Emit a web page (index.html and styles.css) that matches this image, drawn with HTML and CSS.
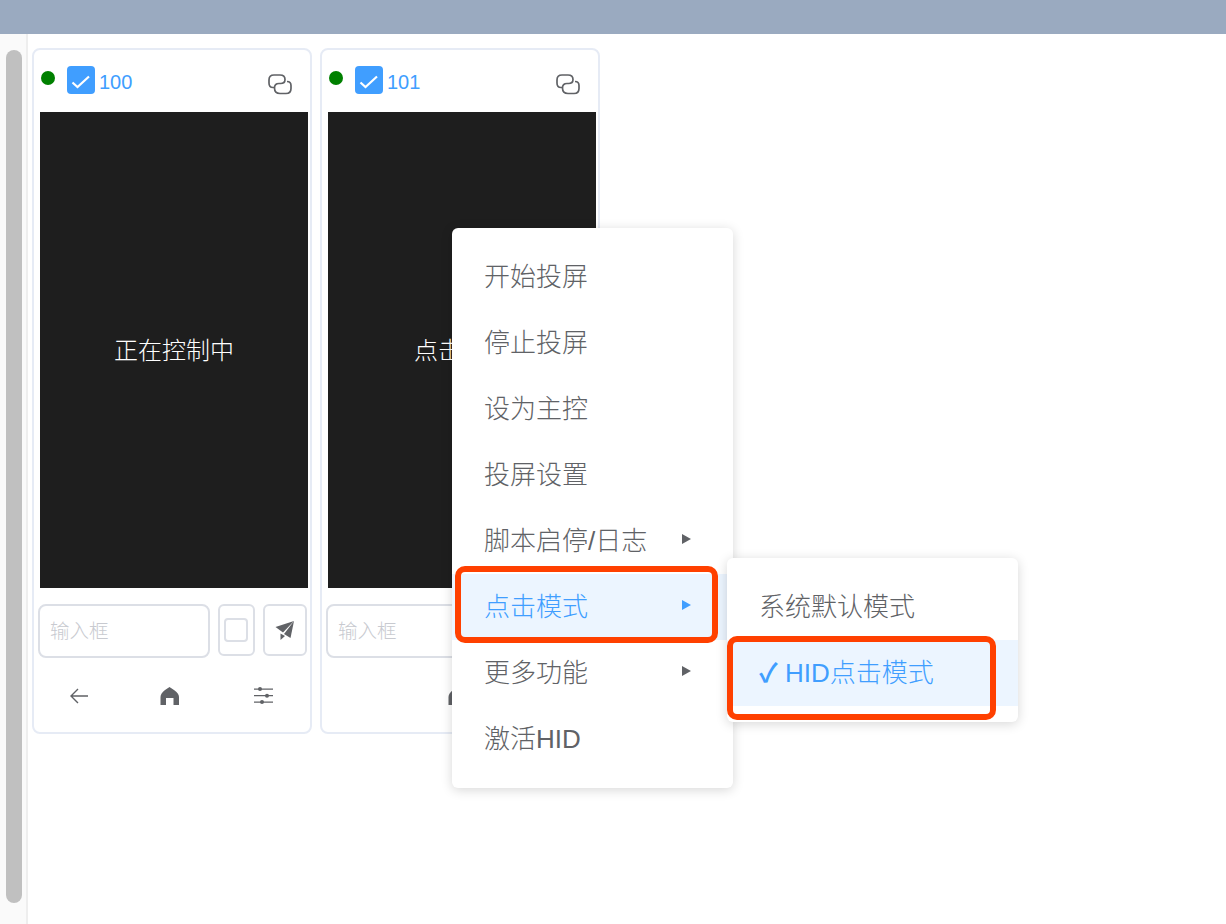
FILE: index.html
```html
<!DOCTYPE html>
<html lang="zh-CN">
<head>
    <meta charset="UTF-8">
    <title>投屏控制</title>
    <link rel="stylesheet" href="styles.css">
</head>
<body>

<div class="top-bar"></div>

<div class="main">
    <div class="side">
        <div class="side-thumb"></div>
    </div>

    <div class="device-list">
        <!-- 设备 100 -->
        <div class="device-card">
            <div class="device-head">
                <span class="status-dot"></span>
                <span class="check-box">
                    <svg width="28" height="28" viewBox="0 0 28 28"><path d="M5.500 16.500 L10.500 21 L22 10.500" fill="none" stroke="#fff" stroke-width="2.200"/></svg>
                </span>
                <span class="device-no">100</span>
                <svg class="link-icon" width="27" height="24" viewBox="0 0 27 24" fill="none" stroke="#606266" stroke-width="1.700">
                    <path d="M7 14.500 H6 Q2 14.500 2 10 V7 Q2 2 7 2 H13 Q18 2 18 6.500 Q18 10.500 13.500 10.500 H12"/>
                    <path d="M12 10.500 Q7.500 10.500 7.500 15 Q7.500 20.500 13 20.500 H19 Q24 20.500 24 15.500 V12.500 Q24 8.500 20 8.500"/>
                </svg>
            </div>
            <div class="device-screen">正在控制中</div>
            <div class="device-input">
                <div class="text-box">输入框</div>
                <div class="small-btn check-btn"><span class="empty-check"></span></div>
                <div class="small-btn send-btn">
                    <svg width="20" height="20" viewBox="0 0 20 20" fill="#606266"><path d="M0.500 7 L19 1 L8 12.500 Z"/><path d="M19 1 L15.500 18 L9 14 Z"/><path d="M5.500 13.500 L10 16 L5.500 20 Z"/></svg>
                </div>
            </div>
            <div class="device-nav">
                <svg width="20" height="20" viewBox="0 0 20 20" fill="none" stroke="#606266" stroke-width="1.400"><path d="M18 10 H1 M8 3 L1 10 L8 17"/></svg>
                <svg width="20" height="20" viewBox="0 0 20 20" fill="#606266"><path d="M9.500 1 L14 4 Q19 7.500 19 11 V19 H13.500 V12 H6 V19 H0.500 V11 Q0.500 7.500 5 4 Z"/></svg>
                <svg width="20" height="20" viewBox="0 0 20 20" fill="#606266"><path d="M0 2.500 H19 V3.700 H0 Z M0 9.100 H19 V10.300 H0 Z M0 15.500 H19 V16.700 H0 Z"/><circle cx="6" cy="3.100" r="2"/><circle cx="13" cy="9.700" r="2"/><circle cx="8" cy="16.100" r="2"/></svg>
            </div>
        </div>

        <!-- 设备 101 -->
        <div class="device-card">
            <div class="device-head">
                <span class="status-dot"></span>
                <span class="check-box">
                    <svg width="28" height="28" viewBox="0 0 28 28"><path d="M5.500 16.500 L10.500 21 L22 10.500" fill="none" stroke="#fff" stroke-width="2.200"/></svg>
                </span>
                <span class="device-no">101</span>
                <svg class="link-icon" width="27" height="24" viewBox="0 0 27 24" fill="none" stroke="#606266" stroke-width="1.700">
                    <path d="M7 14.500 H6 Q2 14.500 2 10 V7 Q2 2 7 2 H13 Q18 2 18 6.500 Q18 10.500 13.500 10.500 H12"/>
                    <path d="M12 10.500 Q7.500 10.500 7.500 15 Q7.500 20.500 13 20.500 H19 Q24 20.500 24 15.500 V12.500 Q24 8.500 20 8.500"/>
                </svg>
            </div>
            <div class="device-screen">点击投屏</div>
            <div class="device-input">
                <div class="text-box">输入框</div>
            </div>
            <div class="device-nav">
                <span class="nav-blank"></span>
                <svg width="20" height="20" viewBox="0 0 20 20" fill="#606266"><path d="M9.500 1 L14 4 Q19 7.500 19 11 V19 H13.500 V12 H6 V19 H0.500 V11 Q0.500 7.500 5 4 Z"/></svg>
            </div>
        </div>
    </div>
</div>

<!-- 右键菜单 -->
<ul class="context-menu main-menu">
    <li>开始投屏</li>
    <li>停止投屏</li>
    <li>设为主控</li>
    <li>投屏设置</li>
    <li class="has-sub">脚本启停/日志</li>
    <li class="has-sub active">点击模式</li>
    <li class="has-sub">更多功能</li>
    <li>激活HID</li>
</ul>

<ul class="context-menu sub-menu">
    <li>系统默认模式</li>
    <li class="active"><span class="tick">✓</span> HID点击模式</li>
</ul>

<!-- 红框标注 -->
<div class="mark mark-one"></div>
<div class="mark mark-two"></div>

</body>
</html>
```

FILE: styles.css
```css
* {
    box-sizing: border-box;
}

body {
    margin: 0;
    height: 924px;
    overflow: hidden;
    background: #fff;
    font-family: "Liberation Sans", "Noto Sans CJK SC", sans-serif;
    font-weight: 300;
    color: #606266;
}

.top-bar {
    height: 34px;
    background: #9aaac0;
}

.main {
    display: flex;
    height: 890px;
}

.side {
    width: 28px;
    padding: 16px 4px 0 6px;
    background: #fafafa;
    border-right: 2px solid #eeeeee;
}

.side-thumb {
    width: 16px;
    height: 853px;
    background: #c0c0c0;
    border-radius: 8px;
}

.device-list {
    display: flex;
    gap: 8px;
    padding: 14px 0 0 4px;
}

.device-card {
    width: 280px;
    height: 686px;
    padding: 0 2px 0 6px;
    border: 2px solid #e6ebf5;
    border-radius: 8px;
    background: #fff;
}

.device-head {
    display: flex;
    align-items: flex-start;
    height: 62px;
    padding-top: 16px;
}

.status-dot {
    width: 14px;
    height: 14px;
    margin: 5px 0 0 1px;
    border-radius: 50%;
    background: #008000;
}

.check-box {
    width: 28px;
    height: 28px;
    margin-left: 12px;
    border-radius: 4px;
    background: #409eff;
}

.device-no {
    margin-left: 4px;
    font-size: 20px;
    line-height: 32px;
    color: #409eff;
}

.link-icon {
    margin: 7px 14px 0 auto;
}

.device-screen {
    display: flex;
    align-items: center;
    justify-content: center;
    width: 268px;
    height: 476px;
    padding-bottom: 4px;
    background: #1e1e1e;
    color: #fff;
    font-size: 24px;
}

.device-input {
    display: flex;
    align-items: flex-start;
    margin: 16px 0 0 -2px;
}

.text-box {
    width: 172px;
    height: 54px;
    padding: 0 10px;
    border: 2px solid #dcdfe6;
    border-radius: 8px;
    font-size: 19.500px;
    line-height: 51px;
    color: #c8cad0;
}

.small-btn {
    display: flex;
    align-items: center;
    justify-content: center;
    height: 52px;
    border: 2px solid #dcdfe6;
    border-radius: 6px;
}

.check-btn {
    width: 37px;
    margin-left: 8px;
}

.empty-check {
    width: 24px;
    height: 24px;
    margin-right: 2px;
    border: 2px solid #dcdfe6;
    border-radius: 4px;
}

.send-btn {
    width: 44px;
    margin-left: 8px;
}

.device-nav {
    display: grid;
    grid-template-columns: 90px 94px 20px;
    height: 76px;
    padding: 28px 0 0 30px;
}

/* 菜单 */
.context-menu {
    position: absolute;
    margin: 0;
    padding: 16px 0;
    list-style: none;
    background: #fff;
    border-radius: 6px;
    box-shadow: 0 2px 12px rgba(0, 0, 0, 0.16);
    font-size: 26px;
}

.context-menu li {
    height: 66px;
    padding: 0 32px;
    line-height: 66px;
    white-space: nowrap;
}

.context-menu li.active {
    background: #ecf5ff;
    color: #409eff;
}

.tick {
    font-weight: 700;
}

.has-sub {
    position: relative;
}

.has-sub::after {
    content: "";
    position: absolute;
    top: 26px;
    right: 42px;
    border-left: 9px solid currentColor;
    border-top: 5px solid transparent;
    border-bottom: 5px solid transparent;
}

.main-menu {
    left: 452px;
    top: 228px;
    width: 281px;
}

.sub-menu {
    left: 727px;
    top: 558px;
    width: 291px;
}

.mark {
    position: absolute;
    border: 6px solid #ff4000;
    border-radius: 10px;
}

.mark-one {
    left: 455px;
    top: 566px;
    width: 263px;
    height: 77px;
}

.mark-two {
    left: 727px;
    top: 636px;
    width: 269px;
    height: 84px;
}
```
